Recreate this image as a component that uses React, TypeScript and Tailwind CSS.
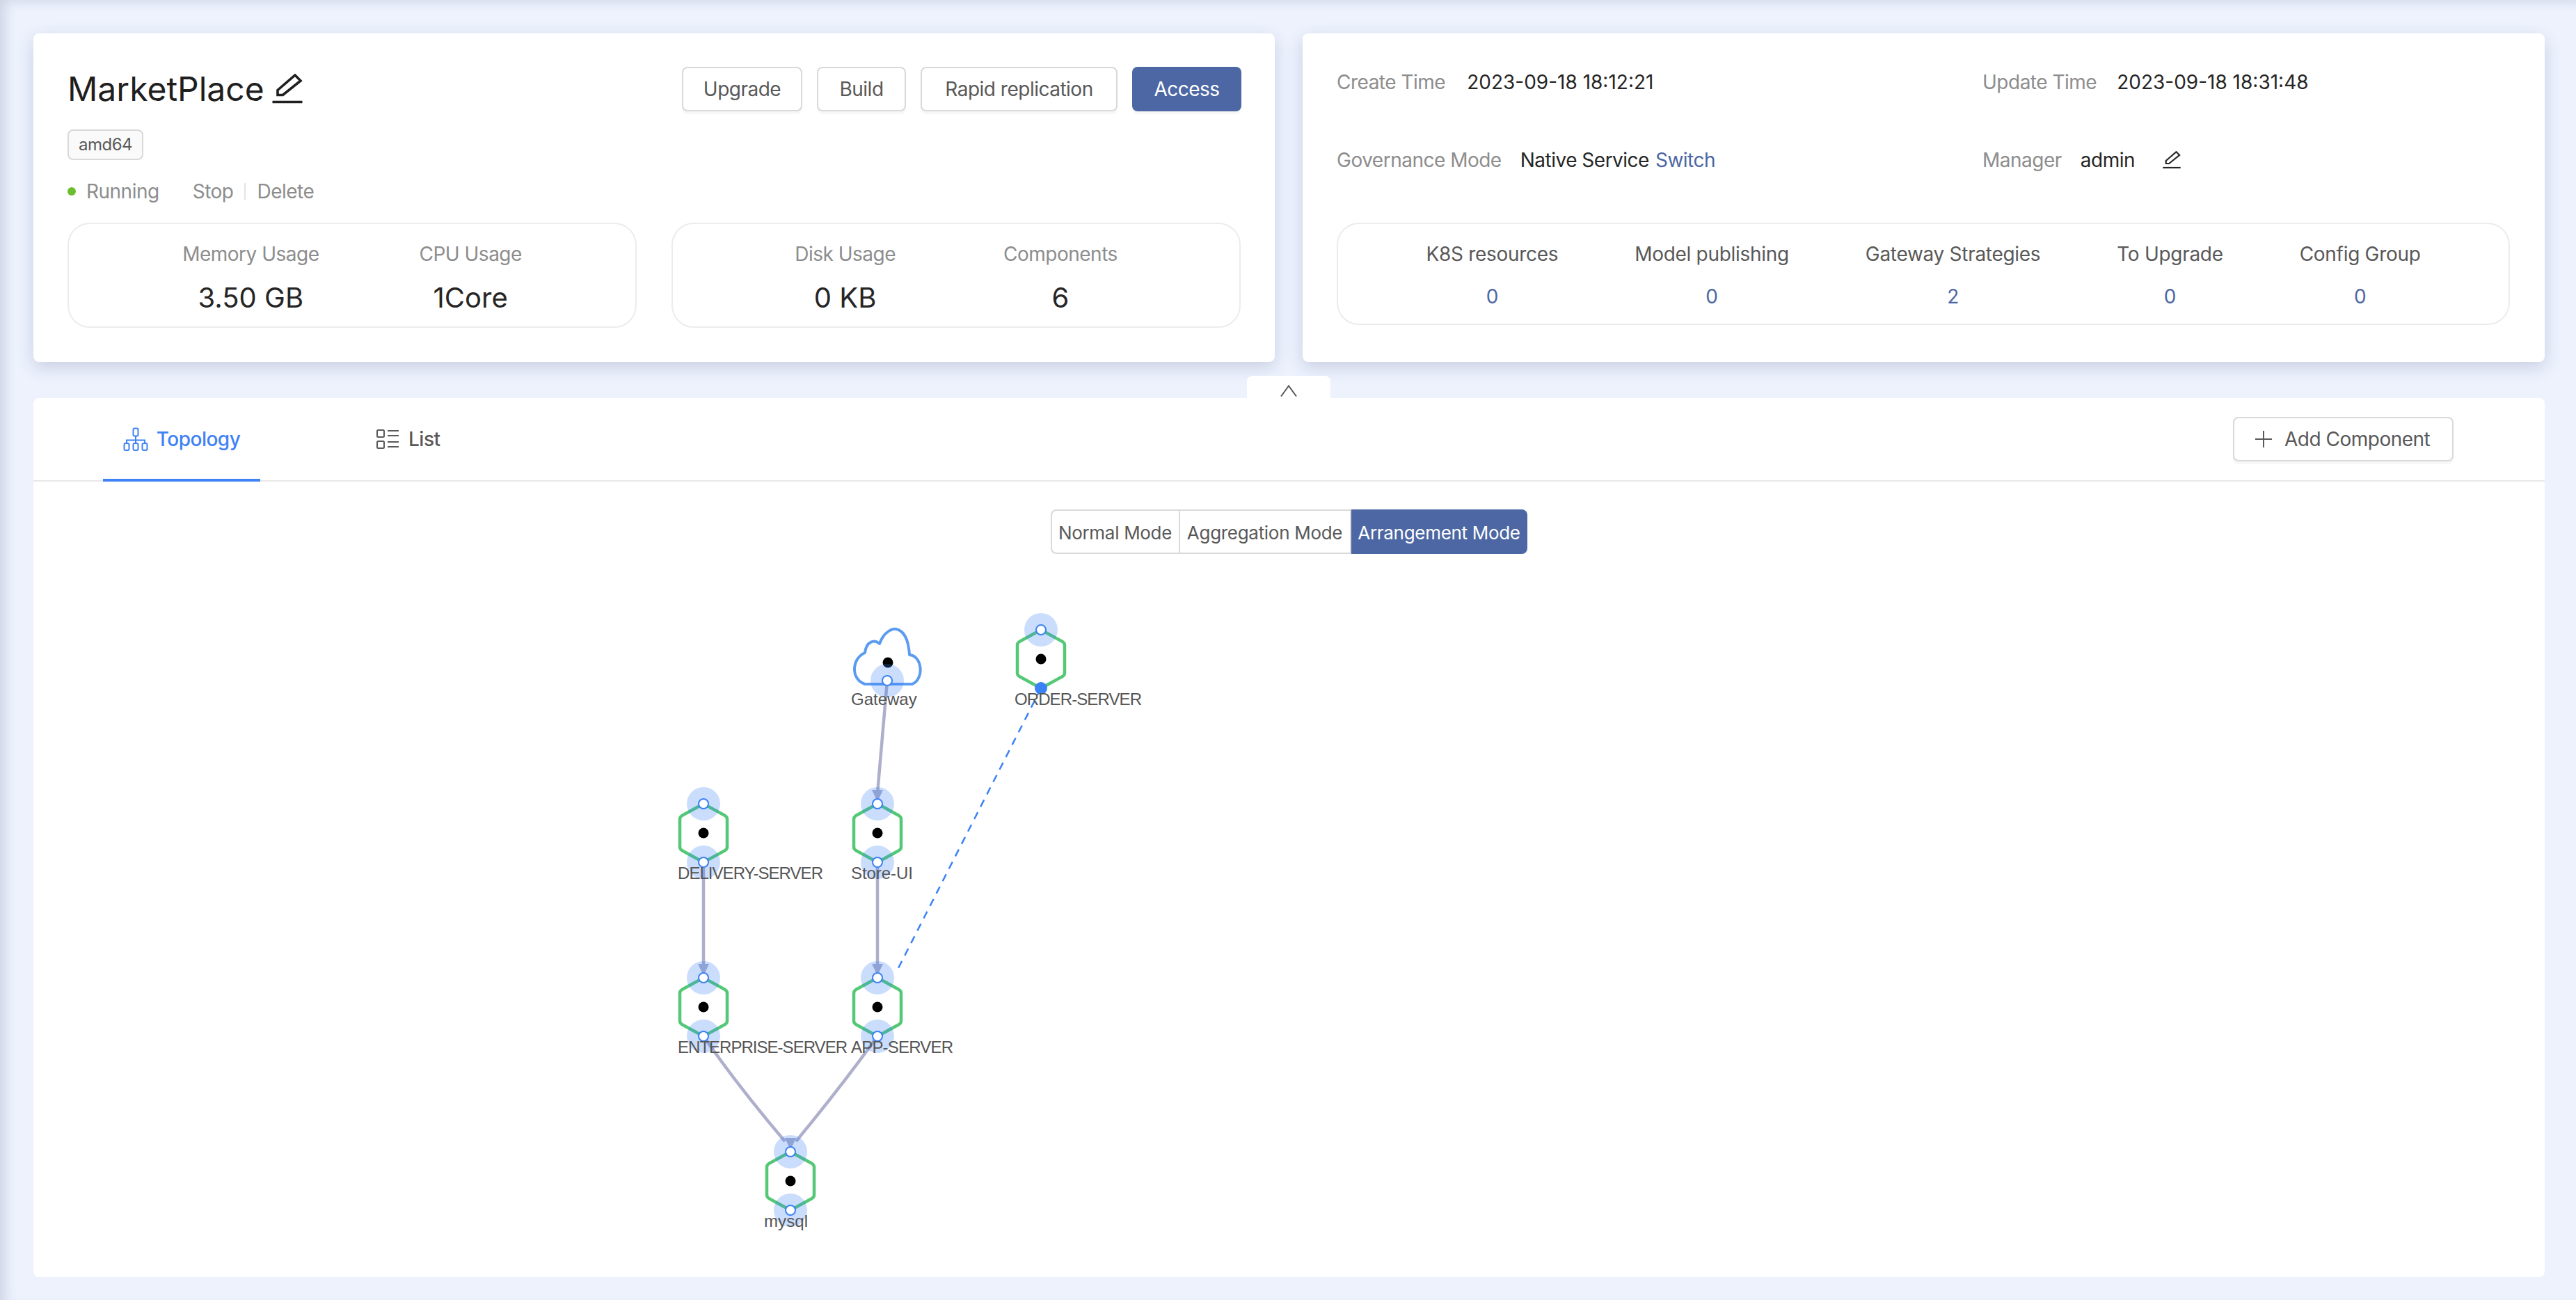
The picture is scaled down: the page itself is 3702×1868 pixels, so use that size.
import React from 'react';

const ui = `font-['Inter','Noto_Sans',sans-serif] tracking-[-0.5px]`;

function EditIcon({ className }: { className: string }) {
  return (
    <svg viewBox="0 0 44 44" className={className} fill="none" stroke="currentColor">
      <path d="M8 30.5 V23.5 L33 2 L41 10 L15.5 30.5 Z" strokeWidth="3.6" strokeLinejoin="miter" />
      <path d="M0.5 40.5 H43.5" strokeWidth="3.6" />
    </svg>
  );
}

function TopologyIcon() {
  return (
    <svg viewBox="0 0 36 34" className="w-[36px] h-[34px]" fill="none" stroke="currentColor" strokeWidth="2">
      <rect x="14.5" y="1.5" width="7" height="11" rx="2" />
      <path d="M18 12.5 V22 M5 23 V18.5 H31 V23 M18 18 V23" />
      <rect x="1.5" y="23" width="7" height="10" rx="2" />
      <rect x="14.5" y="23" width="7" height="10" rx="2" />
      <rect x="27.5" y="23" width="7" height="10" rx="2" />
    </svg>
  );
}

function ListIcon() {
  return (
    <svg viewBox="0 0 32 28" className="w-[32px] h-[28px]" fill="none" stroke="currentColor" strokeWidth="2">
      <rect x="1" y="1" width="10" height="10" rx="1.5" />
      <rect x="1" y="17" width="10" height="10" rx="1.5" />
      <path d="M16 2 H32 M16 9 H32 M16 18 H32 M16 25 H32" />
    </svg>
  );
}

function ActionButton({ label, className }: { label: string; className: string }) {
  return (
    <button className={`h-[64px] rounded-[8px] text-[28px] shadow-[0_4px_0_rgba(0,0,0,0.03)] ${className}`}>
      {label}
    </button>
  );
}

function Stat({ label, value }: { label: string; value: string }) {
  return (
    <div className="flex flex-col items-center">
      <span className="text-[28px] leading-[40px] text-[#8d8d8d] whitespace-nowrap">{label}</span>
      <span className="mt-[23px] text-[40px] leading-[40px] text-[#262626] whitespace-nowrap tracking-normal">{value}</span>
    </div>
  );
}

function LinkStat({ label, value }: { label: string; value: string }) {
  return (
    <div className="flex flex-col items-center tracking-[-0.3px]">
      <span className="text-[28px] leading-[40px] text-[#595959] whitespace-nowrap">{label}</span>
      <span className="mt-[21px] text-[28px] leading-[40px] text-[#4c67a3]">{value}</span>
    </div>
  );
}

function Info({ label, children }: { label: string; children: React.ReactNode }) {
  return (
    <div className="flex items-center text-[28px] leading-[40px] whitespace-nowrap">
      <span className="text-[#8d8d8d] mr-[27px]">{label}</span>
      {children}
    </div>
  );
}

const HEX = 'M0 -42 L31 -25 Q34 -23 34 -20 V20 Q34 23 31 25 L0 42 L-31 25 Q-34 23 -34 20 V-20 Q-34 -23 -31 -25 Z';

type NodeProps = { x: number; y: number; label: string; labelX: number; labelW: number; filledBottom?: boolean };

const nodes: NodeProps[] = [
  { x: 1011, y: 1197, label: 'DELIVERY-SERVER', labelX: 974, labelW: 209 },
  { x: 1261, y: 1197, label: 'Store-UI', labelX: 1223, labelW: 89 },
  { x: 1011, y: 1447, label: 'ENTERPRISE-SERVER', labelX: 974, labelW: 244 },
  { x: 1261, y: 1447, label: 'APP-SERVER', labelX: 1223, labelW: 147 },
  { x: 1136, y: 1697, label: 'mysql', labelX: 1098, labelW: 63 },
  { x: 1496, y: 947, label: 'ORDER-SERVER', labelX: 1458, labelW: 183, filledBottom: true },
];

const edges = [
  { d: 'M1275 978 L1261 1140', tip: [1261, 1152] },
  { d: 'M1011 1239 L1011 1390', tip: [1011, 1402] },
  { d: 'M1261 1239 L1261 1390', tip: [1261, 1402] },
  { d: 'M1011 1489 Q1060 1560 1128 1640', tip: [1136, 1652] },
  { d: 'M1261 1489 Q1210 1560 1144 1640', tip: [1136, 1652] },
];

// canvas is 3609 wide, offset from the page by the panel's position
function Topology() {
  return (
    <svg viewBox="48 692 3609 1143" className="absolute left-0 top-[120px] w-[3609px] h-[1143px] tracking-normal">
      <path d="M1496 989 L1290 1393" stroke="#3b82f6" strokeWidth="2.5" strokeDasharray="11 9" fill="none" />
      {edges.map((e) => (
        <g key={e.d}>
          <path d={e.d} stroke="#aeb0cb" strokeWidth="4.5" fill="none" />
          <path d={`M${e.tip[0]} ${e.tip[1]} l-8 -17 h16 Z`} fill="#aeb0cb" />
        </g>
      ))}
      {/* gateway cloud */}
      <path
        d="M1243 983 C1222 976 1224 946 1243 938 C1245 922 1256 918 1264 925 C1270 908 1282 903 1288 904 C1302 907 1306 925 1307 941 C1325 942 1329 975 1311 983 Z"
        fill="#fff"
        stroke="#5b9cf0"
        strokeWidth="4"
        strokeLinejoin="round"
      />
      <circle cx="1276" cy="952" r="7.5" fill="#000" />
      <circle cx="1275" cy="978" r="24" fill="#3b82f6" fillOpacity="0.27" />
      <circle cx="1275" cy="978" r="7" fill="#fff" stroke="#3b82f6" strokeWidth="2" />
      <text x="1223" y="1013" fontFamily="'Liberation Sans',sans-serif" fontSize="24" fill="#555">
        Gateway
      </text>

      {nodes.map((n) => (
        <g key={n.label}>
          <path d={HEX} transform={`translate(${n.x} ${n.y})`} fill="#fff" stroke="#54c877" strokeWidth="4.5" strokeLinejoin="round" />
          <circle cx={n.x} cy={n.y} r="7.5" fill="#000" />
          <circle cx={n.x} cy={n.y - 42} r="24" fill="#3b82f6" fillOpacity="0.27" />
          <circle cx={n.x} cy={n.y - 42} r="7" fill="#fff" stroke="#3b82f6" strokeWidth="2" />
          {n.filledBottom ? (
            <circle cx={n.x} cy={n.y + 42} r="9" fill="#3b82f6" />
          ) : (
            <>
              <circle cx={n.x} cy={n.y + 42} r="24" fill="#3b82f6" fillOpacity="0.27" />
              <circle cx={n.x} cy={n.y + 42} r="7" fill="#fff" stroke="#3b82f6" strokeWidth="2" />
            </>
          )}
          <text
            x={n.labelX}
            y={n.y + 66}
            textLength={n.labelW}
            lengthAdjust="spacing"
            fontFamily="'Liberation Sans',sans-serif"
            fontSize="24"
            fill="#555"
          >
            {n.label}
          </text>
        </g>
      ))}
    </svg>
  );
}

export default function App() {
  return (
    <div
      className={`${ui} relative w-[3702px] h-[1868px] overflow-hidden bg-[#edf2fd] pt-[48px] pl-[48px] pr-[45px] pb-[33px] flex flex-col shadow-[inset_12px_6px_16px_-4px_rgba(60,70,110,0.16)]`}
    >
      <div className="flex gap-[40px] h-[472px]">
        {/* App summary */}
        <div className="w-[1784px] bg-white rounded-[8px] shadow-[0_8px_24px_rgba(60,70,120,0.2)] pt-[48px] pl-[49px] pr-[48px] flex flex-col">
          <div className="flex justify-between items-start">
            <div className="flex items-center gap-[11px] text-[#1f1f1f]">
              <h1 className="text-[48px] leading-[64px] font-normal tracking-normal">MarketPlace</h1>
              <EditIcon className="w-[44px] h-[44px]" />
            </div>
            <div className="flex gap-[21px]">
              <ActionButton label="Upgrade" className="w-[173px] bg-white border-2 border-[#d9d9d9] text-[#595959]" />
              <ActionButton label="Build" className="w-[128px] bg-white border-2 border-[#d9d9d9] text-[#595959]" />
              <ActionButton label="Rapid replication" className="w-[283px] bg-white border-2 border-[#d9d9d9] text-[#595959]" />
              <ActionButton label="Access" className="w-[157px] bg-[#4c67a3] text-white" />
            </div>
          </div>
          <div className="mt-[26px] self-start h-[44px] px-[14px] flex items-center bg-[#fafafa] border-2 border-[#d9d9d9] rounded-[8px] text-[24px] text-[#595959]">
            amd64
          </div>
          <div className="mt-[25px] h-[40px] flex items-center text-[28px] text-[#8d8d8d]">
            <span className="w-[12px] h-[12px] rounded-full bg-[#6bbf2e] mr-[15px]" />
            <span>Running</span>
            <span className="ml-[48px]">Stop</span>
            <span className="w-[2px] h-[24px] bg-[#e4e4e4] mx-[16px]" />
            <span>Delete</span>
          </div>
          <div className="mt-[25px] flex gap-[50px] pr-[1px]">
            <div className="flex-1 h-[151px] rounded-[32px] border-2 border-[#ececec] flex justify-center gap-[144px] pt-[23px]">
              <Stat label="Memory Usage" value="3.50 GB" />
              <Stat label="CPU Usage" value="1Core" />
            </div>
            <div className="flex-1 h-[151px] rounded-[32px] border-2 border-[#ececec] flex justify-center gap-[155px] pt-[23px]">
              <Stat label="Disk Usage" value="0 KB" />
              <Stat label="Components" value="6" />
            </div>
          </div>
        </div>

        {/* Meta info */}
        <div className="flex-1 bg-white rounded-[8px] shadow-[0_8px_24px_rgba(60,70,120,0.2)] pt-[50px] pl-[49px] pr-[50px] flex flex-col">
          <div className="grid grid-cols-[928px_1fr] gap-y-[72px]">
            <Info label="Create Time">
              <span className="ml-[4px] text-[#262626] tracking-normal">2023-09-18 18:12:21</span>
            </Info>
            <Info label="Update Time">
              <span className="ml-[2px] text-[#262626] tracking-normal">2023-09-18 18:31:48</span>
            </Info>
            <Info label="Governance Mode">
              <span className="text-[#262626]">Native Service</span>
              <span className="ml-[9px] text-[#4c67a3]">Switch</span>
            </Info>
            <Info label="Manager">
              <span className="text-[#262626]">admin</span>
              <EditIcon className="ml-[40px] w-[26px] h-[26px] text-[#262626]" />
            </Info>
          </div>
          <div className="mt-[70px] h-[147px] rounded-[32px] border-2 border-[#ececec] flex justify-center gap-[110px] pt-[23px]">
            <LinkStat label="K8S resources" value="0" />
            <LinkStat label="Model publishing" value="0" />
            <LinkStat label="Gateway Strategies" value="2" />
            <LinkStat label="To Upgrade" value="0" />
            <LinkStat label="Config Group" value="0" />
          </div>
        </div>
      </div>

      {/* Topology panel */}
      <div className="relative mt-[52px] flex-1 bg-white rounded-[8px]">
        <div className="absolute left-[1744px] top-[-32px] w-[120px] h-[32px] bg-white rounded-t-[8px] flex justify-center pt-[13px] text-[#595959]">
          <svg viewBox="0 0 24 17" className="w-[24px] h-[17px]" fill="none" stroke="currentColor" strokeWidth="2">
            <path d="M1 16.5 L12 1.5 L23 16.5" />
          </svg>
        </div>
        <div className="h-[120px] border-b-2 border-[#e8e8e8] flex items-end pl-[100px] pr-[131px] relative">
          <div className="w-[226px] h-[118px] border-b-4 border-[#3f82f5] flex items-center justify-center gap-[12px] text-[#3f82f5] text-[28px] mb-[-2px] font-medium">
            <TopologyIcon />
            <span>Topology</span>
          </div>
          <div className="ml-[167px] h-[118px] flex items-center gap-[14px] text-[#595959] text-[28px] font-medium">
            <ListIcon />
            <span>List</span>
          </div>
          <button className="ml-auto self-start mt-[27px] w-[317px] h-[64px] rounded-[8px] bg-white border-2 border-[#d9d9d9] flex items-center pl-[30px] gap-[18px] text-[#595959] text-[28px] shadow-[0_4px_0_rgba(0,0,0,0.03)]">
            <svg viewBox="0 0 24 24" className="w-[24px] h-[24px]" fill="none" stroke="currentColor" strokeWidth="2">
              <path d="M12 0 V24 M0 12 H24" />
            </svg>
            Add Component
          </button>
        </div>
        <div className="flex justify-center mt-[40px] relative z-10">
          <div className="flex h-[64px] text-[26px] text-[#595959] ml-[-1px] tracking-[-0.3px]">
            <div className="w-[186px] flex items-center justify-center pt-[2px] bg-white border-2 border-[#d9d9d9] rounded-l-[8px]">Normal Mode</div>
            <div className="w-[246px] flex items-center justify-center pt-[2px] bg-white border-y-2 border-r-2 border-[#d9d9d9]">Aggregation Mode</div>
            <div className="w-[253px] flex items-center justify-center pt-[2px] bg-[#4c67a3] text-white rounded-r-[8px]">Arrangement Mode</div>
          </div>
        </div>
        <Topology />
      </div>
    </div>
  );
}
